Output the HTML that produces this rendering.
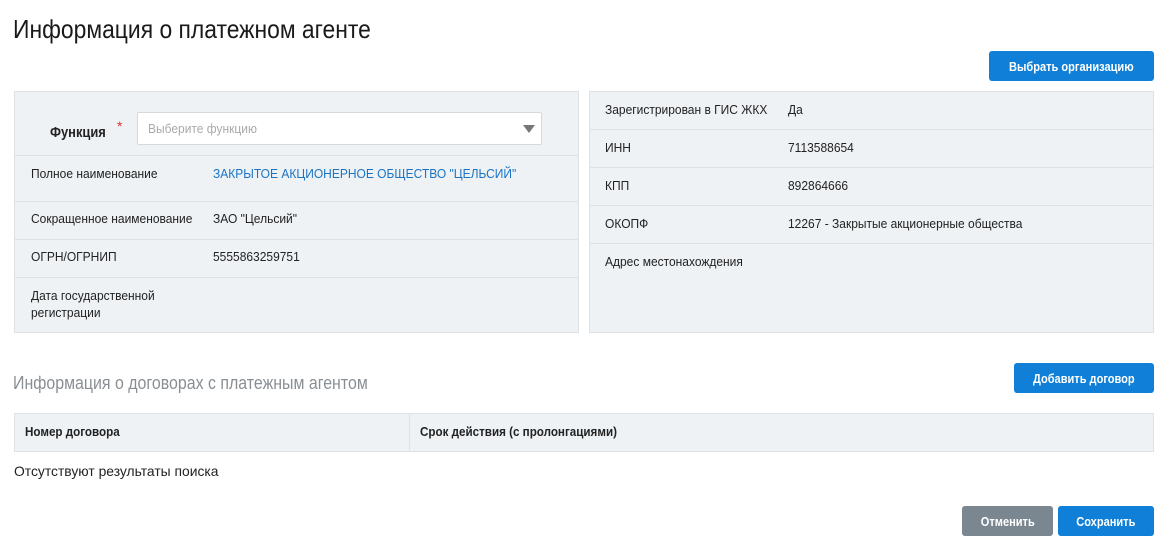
<!DOCTYPE html>
<html><head><meta charset="utf-8"><style>
body{margin:0;width:1167px;height:544px;background:#fff;font-family:"Liberation Sans",sans-serif;color:#222;position:relative;overflow:hidden}
.a{position:absolute;white-space:nowrap}
.c{transform:scaleX(.96);transform-origin:left center}
.t{font-size:12.5px;line-height:15px}
.btn{position:absolute;background:#0f7fd8;color:#fff;border-radius:3px;font-weight:bold;font-size:13px;display:flex;align-items:center;justify-content:center}
.btn span{transform:scaleX(.85);display:inline-block;white-space:nowrap}
.panel{position:absolute;background:#eff2f5;border:1px solid #dde2e7;box-sizing:border-box}
.hl{position:absolute;left:0;right:0;height:1px;background:#dde2e7}
</style></head><body>
<div class="a" style="left:13px;top:14px;font-size:26px;line-height:30px;color:#1a1a1a;transform:scaleX(.88);transform-origin:left center">Информация о платежном агенте</div>
<div class="btn" style="left:989px;top:51px;width:165px;height:30px"><span>Выбрать организацию</span></div>

<div class="panel" style="left:14px;top:91px;width:565px;height:242px">
 <div class="hl" style="top:63px"></div><div class="hl" style="top:109px"></div><div class="hl" style="top:147px"></div><div class="hl" style="top:185px"></div>
 <div class="a" style="left:35px;top:32px;font-size:15px;font-weight:bold;transform:scaleX(.86);transform-origin:left center">Функция</div>
 <div class="a" style="left:102px;top:26px;color:#d33;font-size:14px">*</div>
 <div class="a" style="left:122px;top:20px;width:405px;height:33px;background:#fff;border:1px solid #d6d9dc;border-radius:2px;box-sizing:border-box"></div>
 <div class="a c t" style="left:133px;top:30px;color:#aaa">Выберите функцию</div>
 <div class="a" style="left:508px;top:33px;width:0;height:0;border-left:6px solid transparent;border-right:6px solid transparent;border-top:8px solid #777"></div>
 <div class="a t c" style="left:16px;top:75px">Полное наименование</div>
 <div class="a t c" style="left:198px;top:75px;color:#1a74c4">ЗАКРЫТОЕ АКЦИОНЕРНОЕ ОБЩЕСТВО "ЦЕЛЬСИЙ"</div>
 <div class="a t c" style="left:16px;top:120px">Сокращенное наименование</div>
 <div class="a t c" style="left:198px;top:120px">ЗАО "Цельсий"</div>
 <div class="a t c" style="left:16px;top:158px">ОГРН/ОГРНИП</div>
 <div class="a t c" style="left:198px;top:158px">5555863259751</div>
 <div class="a t c" style="left:16px;top:196px;line-height:17px">Дата государственной<br>регистрации</div>
</div>

<div class="panel" style="left:589px;top:91px;width:565px;height:242px">
 <div class="hl" style="top:37px"></div><div class="hl" style="top:75px"></div><div class="hl" style="top:113px"></div><div class="hl" style="top:151px"></div>
 <div class="a t c" style="left:15px;top:11px">Зарегистрирован в ГИС ЖКХ</div><div class="a t c" style="left:198px;top:11px">Да</div>
 <div class="a t c" style="left:15px;top:49px">ИНН</div><div class="a t c" style="left:198px;top:49px">7113588654</div>
 <div class="a t c" style="left:15px;top:87px">КПП</div><div class="a t c" style="left:198px;top:87px">892864666</div>
 <div class="a t c" style="left:15px;top:125px">ОКОПФ</div><div class="a t c" style="left:198px;top:125px">12267 - Закрытые акционерные общества</div>
 <div class="a t c" style="left:15px;top:163px">Адрес местонахождения</div>
</div>

<div class="a" style="left:13px;top:373px;font-size:18px;line-height:20px;color:#8a8f94;transform:scaleX(.885);transform-origin:left center">Информация о договорах с платежным агентом</div>
<div class="btn" style="left:1014px;top:363px;width:140px;height:30px"><span>Добавить договор</span></div>

<div class="panel" style="left:14px;top:413px;width:1140px;height:39px">
 <div class="a" style="left:394px;top:0;width:1px;height:37px;background:#dde2e7"></div>
 <div class="a t" style="left:10px;top:11px;font-weight:bold;transform:scaleX(.93);transform-origin:left center">Номер договора</div>
 <div class="a t" style="left:405px;top:11px;font-weight:bold;transform:scaleX(.93);transform-origin:left center">Срок действия (с пролонгациями)</div>
</div>
<div class="a" style="left:14px;top:463px;font-size:14px;line-height:16px;transform:scaleX(.99);transform-origin:left center">Отсутствуют результаты поиска</div>

<div class="btn" style="left:962px;top:506px;width:91px;height:30px;background:#7a8690"><span>Отменить</span></div>
<div class="btn" style="left:1058px;top:506px;width:96px;height:30px"><span>Сохранить</span></div>
</body></html>
